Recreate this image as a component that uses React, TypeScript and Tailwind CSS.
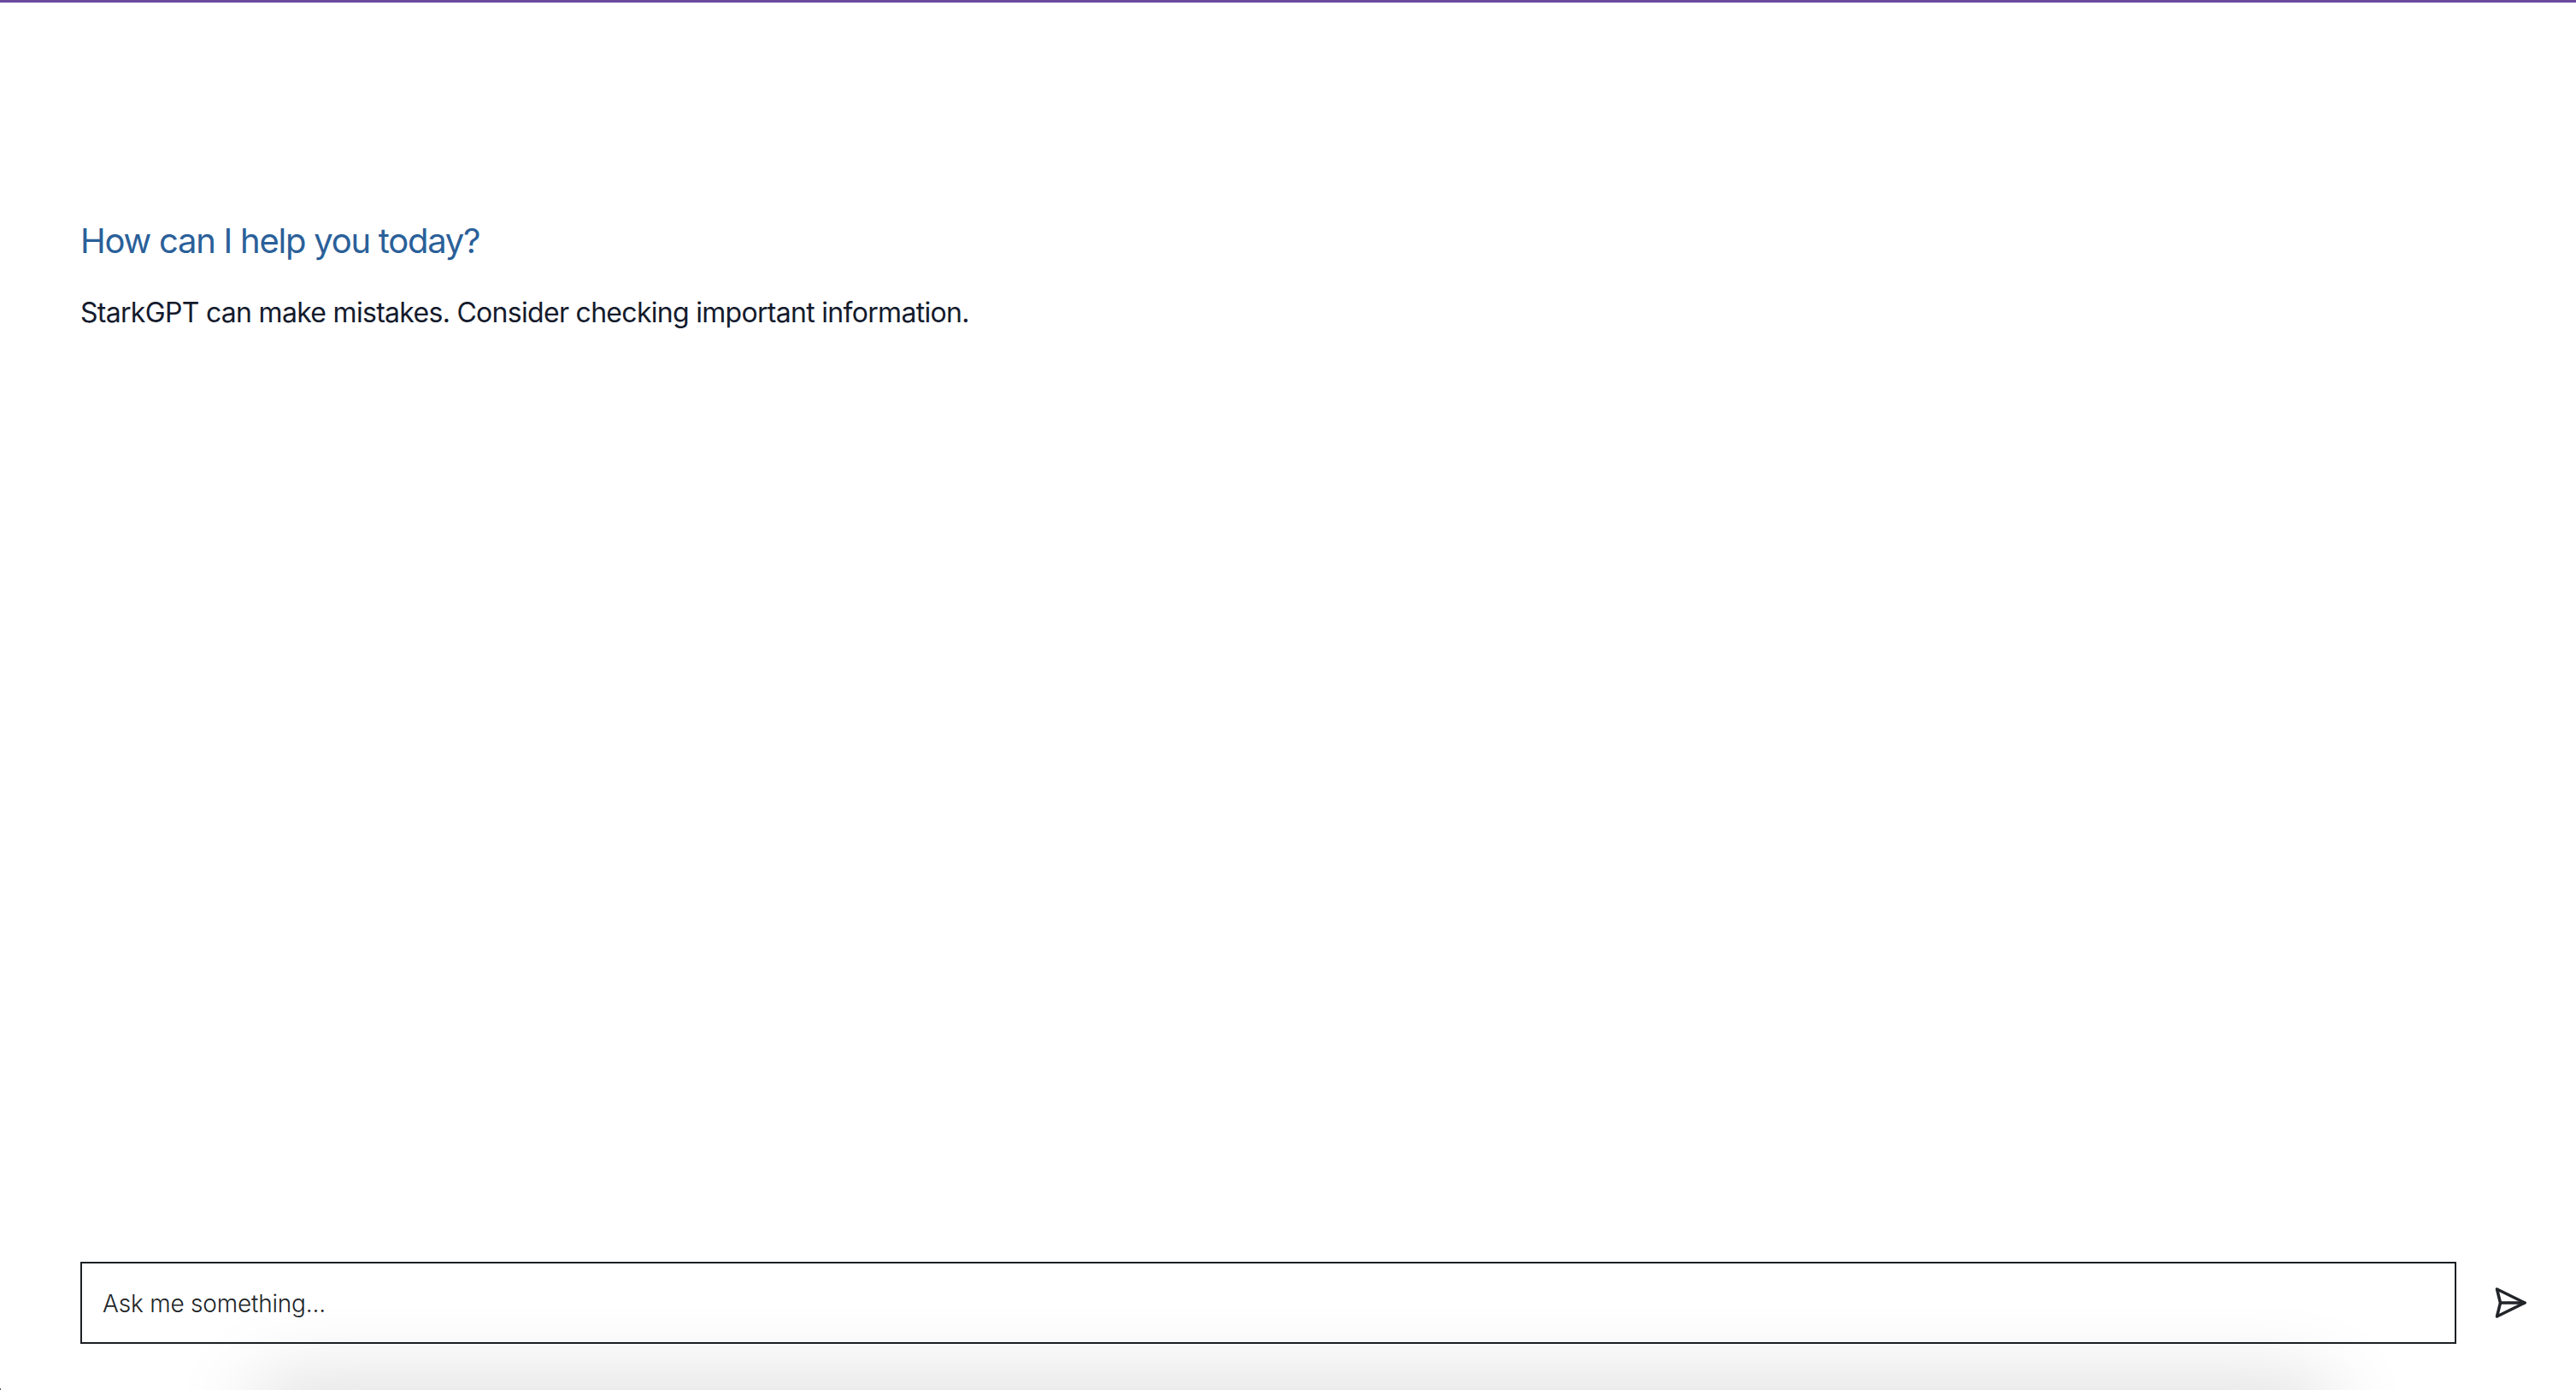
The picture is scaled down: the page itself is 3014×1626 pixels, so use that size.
import React from "react";

export default function App() {
  return (
    <div className="relative flex h-[1626px] w-full flex-col overflow-hidden border-t-[3px] border-[#6b4a9e] bg-white font-['Inter',sans-serif]">
      <main className="flex flex-1 flex-col px-[94px] pt-[255px]">
        <h1 className="text-[40px] leading-[48px] font-normal tracking-[-1.25px] text-[#2a6099]">How can I help you today?</h1>
        <p className="mt-[36px] text-[32px] leading-[48px] tracking-[-0.7px] text-[#141b2d]">StarkGPT can make mistakes. Consider checking important information.</p>
      </main>
      <div className="flex items-center pb-[54px] pl-[94px]">
        <div className="flex h-[96px] w-[2780px] items-center border-2 border-[#1c1f23] bg-white pt-[2px] pl-[24px] pr-[24px]">
          <input readOnly placeholder="Ask me something..." className="w-full bg-transparent text-[28px] font-[350] tracking-[-0.2px] text-[#212529] outline-none placeholder:text-[#212529]" />
        </div>
        <button className="ml-[44px] text-[#212529]" aria-label="Send">
          <svg width="40" height="40" viewBox="0 0 40 40" fill="none" stroke="currentColor" strokeWidth="3.5" strokeLinejoin="round" strokeLinecap="round">
            <path d="M3.5 4 L36 20 L3.5 36 L7.5 20 Z" />
            <path d="M7.5 20 H36" />
          </svg>
        </button>
      </div>
      <div className="absolute bottom-[-60px] left-[300px] h-[60px] w-[2425px] shadow-[0_0_100px_rgba(0,0,0,0.2)]" />
      <div className="absolute bottom-0 left-0 h-[2px] w-[1px] bg-[#555555]" />
    </div>
  );
}
